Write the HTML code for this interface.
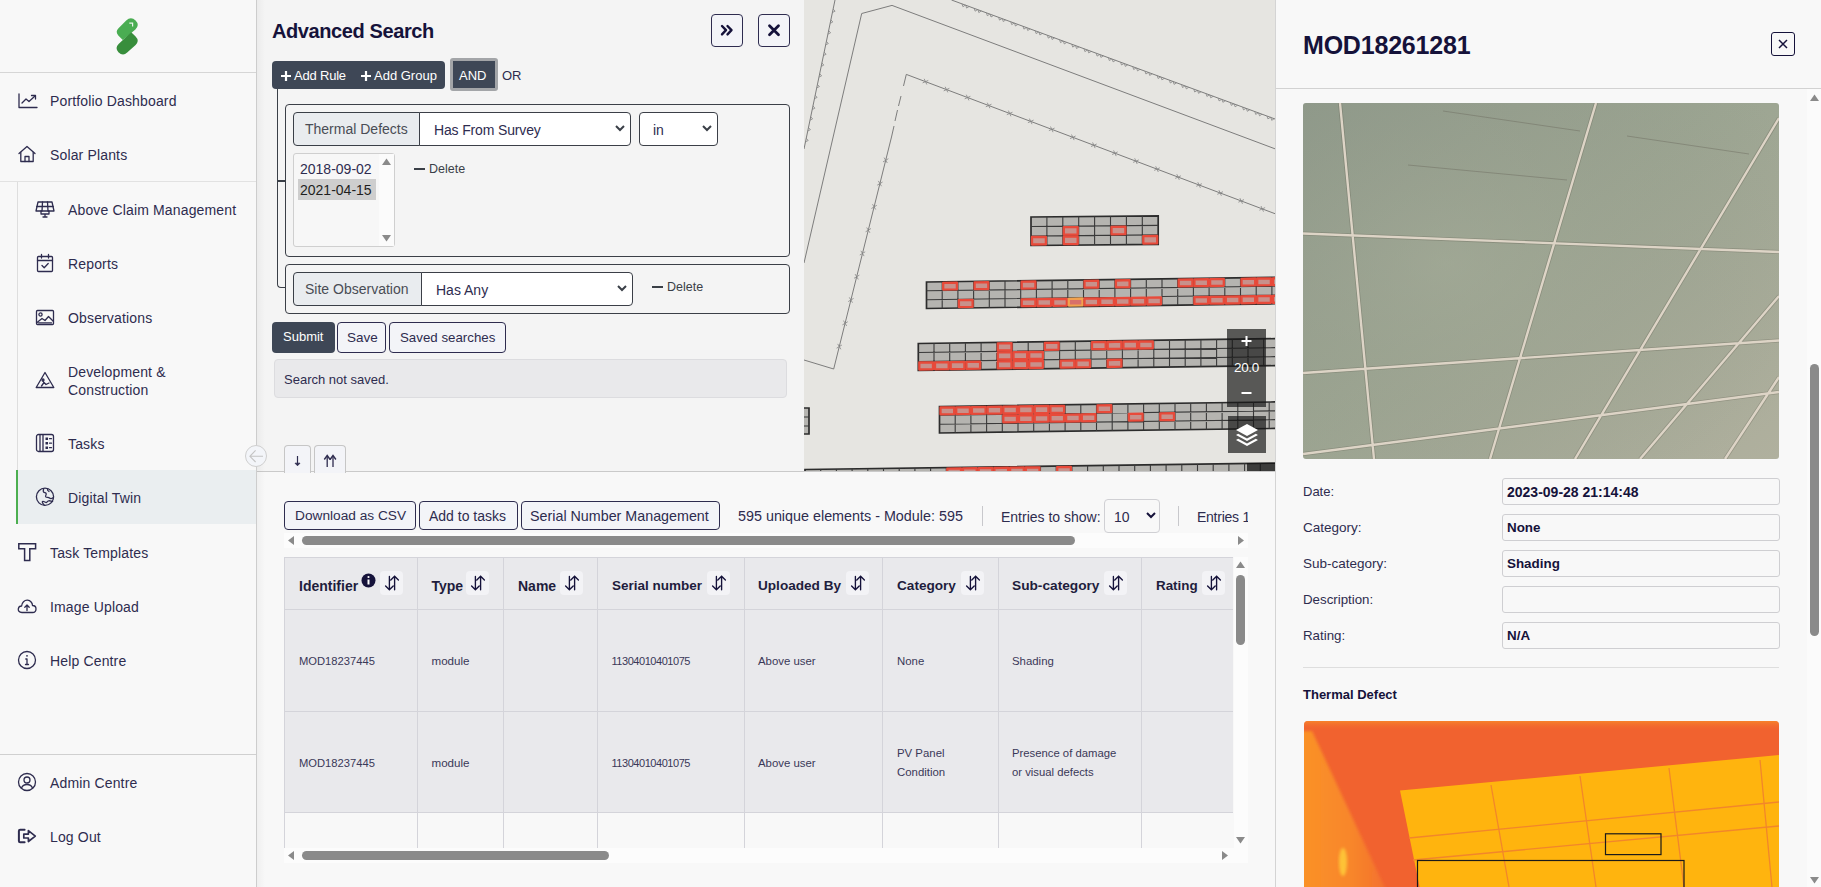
<!DOCTYPE html>
<html><head><meta charset="utf-8">
<style>
*{box-sizing:border-box;margin:0;padding:0}
html,body{width:1821px;height:887px;overflow:hidden;background:#f8f8f8;font-family:"Liberation Sans",sans-serif;color:#2e2c4f}
.a{position:absolute;white-space:nowrap}
#side{position:absolute;left:0;top:0;width:257px;height:887px;background:#f8f8f8;border-right:1px solid #cdcdcd}
.nav{position:absolute;font-size:14px;color:#2e2c4f;letter-spacing:0.15px}
.ico{position:absolute}
#adv{position:absolute;left:257px;top:0;width:547px;height:471px;background:#f4f4f4}
#map{position:absolute;left:804px;top:0;width:471px;height:471px;background:#e5e4e0;overflow:hidden}
#tbl{position:absolute;left:257px;top:471px;width:1018px;height:416px;background:#f8f8f8;border-top:1px solid #cacaca}
#rp{position:absolute;left:1275px;top:0;width:546px;height:887px;background:#f8f8f8;border-left:1px solid #d4d4d4}
.btn{position:absolute;border:1px solid #2e2c4f;border-radius:4px;background:#f3f4f8;font-size:14px;color:#2e2c4f;text-align:center}
.dk{position:absolute;background:#3e4756;color:#fff;font-size:13px}
.box{position:absolute;border:1px solid #3b3f47;border-radius:4px}
.sel{position:absolute;background:#fff;border:1px solid #3b3f47;border-radius:4px;font-size:14px;color:#2e2c4f}
.lbl{position:absolute;background:#e9ecef;font-size:14px;color:#4a4d55}
.th{position:absolute;font-size:14px;font-weight:bold;color:#1f1d3d}
.td{position:absolute;font-size:12px;color:#3a3858}
.sort{position:absolute;width:20px;height:20px;background:#f4f4f6;border-radius:3px}
</style></head><body>


<div id="side">
 <svg class="ico" style="left:112px;top:14px" width="32" height="44" viewBox="112 14 32 44">
  <path d="M118.5 28.2 L126.2 20.5 Q131 16 135.6 20.6 Q140 25 135.4 29.6 L122.8 40 L118.3 35.4 Q115 31.7 118.5 28.2 Z" fill="#4aad52"/>
  <path d="M131.2 32.3 L135.6 36.6 Q139.8 40.8 135.6 45 L127.2 52.6 Q122.8 56.6 118.4 52.2 Q114.6 48 118.6 44 Z" fill="#388e3c"/>
  <path d="M129.3 23.2 L132.6 23.2 L132.6 26.5" stroke="#e8f5e9" stroke-width="1.2" fill="none"/>
 </svg>
 <div style="position:absolute;left:0;top:72px;width:256px;height:1px;background:#d6d6d6"></div>
 <div style="position:absolute;left:0;top:181px;width:256px;height:1px;background:#e2e2e2"></div>
 <div style="position:absolute;left:17px;top:182px;width:1px;height:342px;background:#dedede"></div>
 <div style="position:absolute;left:16px;top:470px;width:240px;height:54px;background:#eaeef0"></div>
 <div style="position:absolute;left:16px;top:470px;width:2px;height:54px;background:#4caf50"></div>
 <div style="position:absolute;left:0;top:754px;width:256px;height:1px;background:#d0d0d0"></div>
<svg class="ico" style="left:17.8px;top:92.5px" width="20" height="16" viewBox="0 0 20 16"><path d="M1 1 V14.5 H19" fill="none" stroke="#2e2c4f" stroke-width="1.3" stroke-linecap="round" stroke-linejoin="round"/><path d="M4 10 L8 6 L11 8.5 L17 3" fill="none" stroke="#2e2c4f" stroke-width="1.3" stroke-linecap="round" stroke-linejoin="round"/><path d="M13.5 2.5 H17.5 V6" fill="none" stroke="#2e2c4f" stroke-width="1.3" stroke-linecap="round" stroke-linejoin="round"/></svg>
<svg class="ico" style="left:17px;top:145px" width="20" height="18" viewBox="0 0 20 18"><path d="M2 8.5 L10 1.5 L18 8.5" fill="none" stroke="#2e2c4f" stroke-width="1.3" stroke-linecap="round" stroke-linejoin="round"/><path d="M3.8 7.5 V16.5 H16.2 V7.5" fill="none" stroke="#2e2c4f" stroke-width="1.3" stroke-linecap="round" stroke-linejoin="round"/><path d="M8 16.5 V11.5 H12 V16.5" fill="none" stroke="#2e2c4f" stroke-width="1.3" stroke-linecap="round" stroke-linejoin="round"/></svg>
<svg class="ico" style="left:35px;top:201px" width="20" height="17" viewBox="0 0 20 17"><path d="M3 1 H17 L19 10 H1 Z" fill="none" stroke="#2e2c4f" stroke-width="1.3" stroke-linecap="round" stroke-linejoin="round"/><path d="M1.8 5.5 H18.2 M7.5 1 L7 10 M12.5 1 L13 10 M6 10 V13 H14 V10 M8 16 H12 M10 13 V16" fill="none" stroke="#2e2c4f" stroke-width="1.3" stroke-linecap="round" stroke-linejoin="round"/></svg>
<svg class="ico" style="left:35px;top:253px" width="20" height="20" viewBox="0 0 20 20"><rect x="2.5" y="3.5" width="15" height="15" rx="1" fill="none" stroke="#2e2c4f" stroke-width="1.3" stroke-linecap="round" stroke-linejoin="round"/><path d="M2.5 7.5 H17.5 M6.5 1.5 V5 M13.5 1.5 V5 M7 12.5 L9.2 14.7 L13.2 10.5" fill="none" stroke="#2e2c4f" stroke-width="1.3" stroke-linecap="round" stroke-linejoin="round"/></svg>
<svg class="ico" style="left:35px;top:309px" width="20" height="17" viewBox="0 0 20 17"><rect x="1.5" y="1.5" width="17" height="14" rx="1" fill="none" stroke="#2e2c4f" stroke-width="1.3" stroke-linecap="round" stroke-linejoin="round"/><circle cx="5.5" cy="5.5" r="1.6" fill="none" stroke="#2e2c4f" stroke-width="1.3" stroke-linecap="round" stroke-linejoin="round"/><path d="M2 13.5 L7 9.5 L10 11.5 L13.5 7.5 L18 12" fill="none" stroke="#2e2c4f" stroke-width="1.3" stroke-linecap="round" stroke-linejoin="round"/><path d="M3.5 13.8 H16.5" fill="none" stroke="#2e2c4f" stroke-width="1.3" stroke-linecap="round" stroke-linejoin="round"/></svg>
<svg class="ico" style="left:35px;top:371px" width="20" height="18" viewBox="0 0 20 18"><path d="M10 1.5 L18.8 16.5 H1.2 Z" fill="none" stroke="#2e2c4f" stroke-width="1.3" stroke-linecap="round" stroke-linejoin="round"/><circle cx="8" cy="9" r="1" fill="none" stroke="#2e2c4f" stroke-width="1.3" stroke-linecap="round" stroke-linejoin="round"/><path d="M6.5 15 L9 11.5 L11 13.5 L14 12 M9 11.5 L8 10" fill="none" stroke="#2e2c4f" stroke-width="1.3" stroke-linecap="round" stroke-linejoin="round"/></svg>
<svg class="ico" style="left:35px;top:433px" width="20" height="20" viewBox="0 0 20 20"><rect x="1.5" y="1.5" width="17" height="17" rx="2" fill="none" stroke="#2e2c4f" stroke-width="1.3" stroke-linecap="round" stroke-linejoin="round"/><path d="M5 2 V18 M8 2 V18" fill="none" stroke="#2e2c4f" stroke-width="1.3" stroke-linecap="round" stroke-linejoin="round"/><rect x="10.5" y="4.5" width="2.5" height="2.5" fill="#2e2c4f"/><rect x="10.5" y="9" width="2.5" height="2.5" fill="#2e2c4f"/><rect x="10.5" y="13.5" width="2.5" height="2.5" fill="#2e2c4f"/><path d="M14.5 5.7 H16.5 M14.5 10.2 H16.5 M14.5 14.7 H16.5" fill="none" stroke="#2e2c4f" stroke-width="1.3" stroke-linecap="round" stroke-linejoin="round"/></svg>
<svg class="ico" style="left:35px;top:487px" width="20" height="20" viewBox="0 0 20 20"><circle cx="10" cy="9.8" r="8.6" fill="none" stroke="#2e2c4f" stroke-width="1.3" stroke-linecap="round" stroke-linejoin="round"/><path d="M8.5 1.6 C8.8 3.2 7.6 3.8 8.6 5 C9.6 6 11 5.2 11.2 6.8 C11.4 8.2 10 8.6 10.8 9.8 C11.6 10.8 13.5 10 14.5 11 C15.5 12 17 11.5 18.4 10.5 M12.5 2.2 C12.2 3.2 13.2 4 14 4.5 M17.6 14.5 C16 14.2 15 13.5 13.5 13.8 C12 14 12.5 15.6 11.2 15.5 C9.5 15.4 8.5 13.6 7.5 14.5 C6.6 15.4 8.5 17.3 9.5 18.4" fill="none" stroke="#2e2c4f" stroke-width="1.3" stroke-linecap="round" stroke-linejoin="round"/></svg>
<svg class="ico" style="left:17px;top:542px" width="20" height="20" viewBox="0 0 20 20"><path d="M1.8 1.8 H18.6 V6.8 H12.8 V18.6 H7.6 V6.8 H1.8 Z" fill="none" stroke="#2e2c4f" stroke-width="1.5" stroke-linejoin="miter"/></svg>
<svg class="ico" style="left:17px;top:598px" width="20" height="17" viewBox="0 0 20 17"><path d="M5 14.5 C2 14.5 1 12.5 1.3 10.8 C1.6 9 3 8 4.6 8 C4.8 4.5 7.5 2 10.5 2.2 C13.5 2.4 15.5 5 15.5 7.5 C17.5 7.5 19 9 19 11 C19 13 17.5 14.5 15.5 14.5 Z" fill="none" stroke="#2e2c4f" stroke-width="1.3" stroke-linecap="round" stroke-linejoin="round"/><path d="M10 12.5 V7 M7.8 9.2 L10 7 L12.2 9.2" fill="none" stroke="#2e2c4f" stroke-width="1.3" stroke-linecap="round" stroke-linejoin="round"/></svg>
<svg class="ico" style="left:17px;top:650px" width="20" height="20" viewBox="0 0 20 20"><circle cx="10" cy="10" r="8.5" fill="none" stroke="#2e2c4f" stroke-width="1.3" stroke-linecap="round" stroke-linejoin="round"/><path d="M10 9 V14.5 M8.5 14.5 H11.5 M8.8 9 H10" fill="none" stroke="#2e2c4f" stroke-width="1.3" stroke-linecap="round" stroke-linejoin="round"/><circle cx="10" cy="5.8" r="0.9" fill="#2e2c4f"/></svg>
<svg class="ico" style="left:17px;top:772px" width="20" height="20" viewBox="0 0 20 20"><circle cx="10" cy="10" r="8.5" fill="none" stroke="#2e2c4f" stroke-width="1.3" stroke-linecap="round" stroke-linejoin="round"/><circle cx="10" cy="8" r="3" fill="none" stroke="#2e2c4f" stroke-width="1.3" stroke-linecap="round" stroke-linejoin="round"/><path d="M4.5 16 C5.5 13.3 7.5 12.5 10 12.5 C12.5 12.5 14.5 13.3 15.5 16" fill="none" stroke="#2e2c4f" stroke-width="1.3" stroke-linecap="round" stroke-linejoin="round"/></svg>
<svg class="ico" style="left:17px;top:827px" width="20" height="18" viewBox="0 0 20 18"><path d="M7.6 2.8 H3.2 Q1.9 2.8 1.9 4.1 V14 Q1.9 15.3 3.2 15.3 H7.6" fill="none" stroke="#2e2c4f" stroke-width="2" stroke-linecap="round"/><path d="M6.8 7.1 H11.4 V3.6 L18.3 9.05 L11.4 14.5 V11 H6.8 Z" fill="none" stroke="#2e2c4f" stroke-width="1.7" stroke-linejoin="round"/></svg>
 <div class="nav a" style="left:50px;top:92px;line-height:18px">Portfolio Dashboard</div>
 <div class="nav a" style="left:50px;top:146px;line-height:18px">Solar Plants</div>
 <div class="nav a" style="left:68px;top:201px;line-height:18px">Above Claim Management</div>
 <div class="nav a" style="left:68px;top:255px;line-height:18px">Reports</div>
 <div class="nav a" style="left:68px;top:309px;line-height:18px">Observations</div>
 <div class="nav a" style="left:68px;top:363px;line-height:18px">Development &amp;</div>
 <div class="nav a" style="left:68px;top:381px;line-height:18px">Construction</div>
 <div class="nav a" style="left:68px;top:435px;line-height:18px">Tasks</div>
 <div class="nav a" style="left:68px;top:489px;line-height:18px">Digital Twin</div>
 <div class="nav a" style="left:50px;top:544px;line-height:18px">Task Templates</div>
 <div class="nav a" style="left:50px;top:598px;line-height:18px">Image Upload</div>
 <div class="nav a" style="left:50px;top:652px;line-height:18px">Help Centre</div>
 <div class="nav a" style="left:50px;top:774px;line-height:18px">Admin Centre</div>
 <div class="nav a" style="left:50px;top:828px;line-height:18px">Log Out</div>
</div>
<div id="adv"></div>
<div class="a" style="left:272px;top:19px;font-size:20px;font-weight:bold;letter-spacing:-0.4px;color:#15123a;line-height:24px">Advanced Search</div>
<div class="btn" style="left:711px;top:14px;width:32px;height:33px"><svg width="30" height="31" viewBox="0 0 30 31"><path d="M10 11 L14 15.2 L10 19.4 M15.5 11 L19.5 15.2 L15.5 19.4" fill="none" stroke="#15123a" stroke-width="2.4" stroke-linecap="round" stroke-linejoin="round"/></svg></div>
<div class="btn" style="left:758px;top:14px;width:32px;height:33px"><svg width="30" height="31" viewBox="0 0 30 31"><path d="M10.5 10.8 L19.5 19.8 M19.5 10.8 L10.5 19.8" fill="none" stroke="#15123a" stroke-width="2.8" stroke-linecap="round"/></svg></div>

<div class="dk" style="left:272px;top:61px;width:173px;height:28px;border-radius:4px"></div>
<svg class="a" style="left:280px;top:70px" width="12" height="12" viewBox="0 0 12 12"><path d="M6 1 V11 M1 6 H11" stroke="#fff" stroke-width="2.2"/></svg>
<div class="a" style="left:294px;top:68px;font-size:13px;color:#fff;line-height:16px;letter-spacing:-0.2px">Add Rule</div>
<svg class="a" style="left:360px;top:70px" width="12" height="12" viewBox="0 0 12 12"><path d="M6 1 V11 M1 6 H11" stroke="#fff" stroke-width="2.2"/></svg>
<div class="a" style="left:374px;top:68px;font-size:13px;color:#fff;line-height:16px">Add Group</div>
<div class="a" style="left:450px;top:58px;width:48px;height:33px;border:3px solid #a3a5a8;border-radius:3px;background:#3e4756"></div>
<div class="a" style="left:459px;top:68px;font-size:13px;color:#fff;line-height:16px">AND</div>
<div class="a" style="left:502px;top:68px;font-size:13px;color:#2e2c4f;line-height:16px">OR</div>

<div class="a" style="left:277px;top:89px;width:8px;height:199px;border-left:1.5px solid #3a3f47;border-bottom:1.5px solid #3a3f47;border-bottom-left-radius:4px"></div>
<div class="a" style="left:277px;top:180px;width:8px;height:1.5px;background:#3a3f47"></div>

<div class="box" style="left:285px;top:104px;width:505px;height:153px"></div>
<div class="lbl" style="left:293px;top:112px;width:127px;height:34px;border:1px solid #3a3f47;border-radius:4px 0 0 4px"></div>
<div class="a" style="left:305px;top:120px;font-size:14px;color:#4a4d55;line-height:18px">Thermal Defects</div>
<div class="sel" style="left:419px;top:112px;width:212px;height:34px;border-radius:0 4px 4px 0"></div>
<div class="a" style="left:434px;top:121px;font-size:14px;color:#2e2c4f;line-height:18px;letter-spacing:-0.15px">Has From Survey</div>
<svg class="a" style="left:614px;top:123px" width="12" height="10" viewBox="0 0 12 10"><path d="M2 3 L6 7 L10 3" fill="none" stroke="#3a3f47" stroke-width="2"/></svg>
<div class="sel" style="left:639px;top:112px;width:79px;height:34px"></div>
<div class="a" style="left:653px;top:121px;font-size:14px;color:#2e2c4f;line-height:18px">in</div>
<svg class="a" style="left:701px;top:123px" width="12" height="10" viewBox="0 0 12 10"><path d="M2 3 L6 7 L10 3" fill="none" stroke="#3a3f47" stroke-width="2"/></svg>

<div class="a" style="left:293px;top:153px;width:102px;height:94px;border:1px solid #cfcfcf;border-radius:3px;background:#f7f7f7"></div>
<div class="a" style="left:379px;top:154px;width:15px;height:92px;background:#fbfbfb"></div>
<svg class="a" style="left:381px;top:157px" width="11" height="9" viewBox="0 0 11 9"><path d="M1 8 L5.5 1.5 L10 8 Z" fill="#8a8a8a"/></svg>
<svg class="a" style="left:381px;top:234px" width="11" height="9" viewBox="0 0 11 9"><path d="M1 1 L5.5 7.5 L10 1 Z" fill="#8a8a8a"/></svg>
<div class="a" style="left:298px;top:179px;width:78px;height:21px;background:#cecece"></div>
<div class="a" style="left:300px;top:160px;font-size:14px;color:#2e2c4f;line-height:18px">2018-09-02</div>
<div class="a" style="left:300px;top:181px;font-size:14px;color:#1f1f1f;line-height:18px">2021-04-15</div>
<div class="a" style="left:414px;top:168px;width:11px;height:2px;background:#3a3f47"></div>
<div class="a" style="left:429px;top:161px;font-size:12.5px;color:#3a3f47;line-height:16px">Delete</div>

<div class="box" style="left:285px;top:264px;width:505px;height:50px"></div>
<div class="lbl" style="left:293px;top:272px;width:129px;height:34px;border:1px solid #3a3f47;border-radius:4px 0 0 4px"></div>
<div class="a" style="left:305px;top:280px;font-size:14px;color:#4a4d55;line-height:18px">Site Observation</div>
<div class="sel" style="left:421px;top:272px;width:212px;height:34px;border-radius:0 4px 4px 0"></div>
<div class="a" style="left:436px;top:281px;font-size:14px;color:#2e2c4f;line-height:18px">Has Any</div>
<svg class="a" style="left:616px;top:283px" width="12" height="10" viewBox="0 0 12 10"><path d="M2 3 L6 7 L10 3" fill="none" stroke="#3a3f47" stroke-width="2"/></svg>
<div class="a" style="left:652px;top:286px;width:11px;height:2px;background:#3a3f47"></div>
<div class="a" style="left:667px;top:279px;font-size:12.5px;color:#3a3f47;line-height:16px">Delete</div>

<div class="dk" style="left:272px;top:322px;width:63px;height:31px;border-radius:4px"></div>
<div class="a" style="left:283px;top:329px;font-size:13px;color:#fff;line-height:16px">Submit</div>
<div class="btn" style="left:337px;top:322px;width:49px;height:31px;border-radius:4px"></div>
<div class="a" style="left:347px;top:330px;font-size:13.5px;color:#2e2c4f;line-height:16px">Save</div>
<div class="btn" style="left:389px;top:322px;width:117px;height:31px;border-radius:4px"></div>
<div class="a" style="left:400px;top:330px;font-size:13.3px;color:#2e2c4f;line-height:16px">Saved searches</div>

<div class="a" style="left:274px;top:359px;width:513px;height:39px;background:#e9e9eb;border:1px solid #dcdcdf;border-radius:4px"></div>
<div class="a" style="left:284px;top:372px;font-size:13px;color:#2e2c4f;line-height:16px">Search not saved.</div>

<div class="a" style="z-index:3;left:284px;top:445px;width:27px;height:28px;border:1px solid #c6c6c6;border-bottom:none;border-radius:4px 4px 0 0;background:#f3f4f8"></div>
<div class="a" style="z-index:3;left:314px;top:445px;width:32px;height:28px;border:1px solid #c6c6c6;border-bottom:none;border-radius:4px 4px 0 0;background:#f3f4f8"></div>
<svg class="a" style="z-index:4;left:290px;top:453px" width="14" height="15" viewBox="0 0 14 15"><path d="M7.5 3 V12" fill="none" stroke="#2e2c4f" stroke-width="1.2"/><path d="M5 10.2 L7.5 12.8 L10 10.2 Z" fill="#2e2c4f" stroke="#2e2c4f" stroke-width="0.8"/></svg>
<svg class="a" style="z-index:4;left:322px;top:453px" width="16" height="15" viewBox="0 0 16 15"><path d="M5.2 14 V3.5 M11 14 V3.5" fill="none" stroke="#2e2c4f" stroke-width="1.3"/><path d="M2.3 6.5 L5.2 2.5 L8.1 6.5 M8.1 6.5 L11 2.5 L13.9 6.5" fill="none" stroke="#2e2c4f" stroke-width="1.4" stroke-linejoin="miter"/></svg>
<div class="a" style="z-index:5;left:245px;top:445px;width:22px;height:22px;border-radius:50%;border:1px solid #cfcfcf;background:#f3f5f9"></div>
<svg class="a" style="z-index:6;left:248px;top:449px" width="18" height="15" viewBox="0 0 18 15"><path d="M15 7.3 H2 M7.6 1.4 L1.9 7.3 L7.6 13" fill="none" stroke="#c4c4c4" stroke-width="1.1"/></svg>
<div class="a" style="z-index:2;left:257px;top:0;width:8px;height:887px;background:linear-gradient(to right,rgba(0,0,0,0.035),rgba(0,0,0,0))"></div>
<div id="map"><svg width="471" height="471" viewBox="804 0 471 471" style="position:absolute;left:0;top:0">
<rect x="804" y="0" width="471" height="471" fill="#e6e5e1"/>
<g stroke="#707070" stroke-width="0.9" fill="none">
<path d="M835 0 L804 149"/>
<path d="M951.5 0 L1275 119"/>
<path d="M1275 148.8 L892 5.4 L861.7 13.5 L804 263"/>
<path d="M1275 213.7 L906.3 74.4 L903.5 86"/>
<path d="M901 96 L898.5 106 M897.5 110 L895 121 M894 126 L891.5 137 L833.7 369 L804 360"/>
</g>
<g stroke="#858585" stroke-width="0.8" fill="none">
<path d="M833.1 9.0 L835.1 11.2 L832.4 12.5 M830.9 19.8 L832.8 22.0 L830.2 23.3 M828.6 30.5 L830.6 32.8 L827.9 34.1 M826.4 41.3 L828.3 43.6 L825.7 44.8 M824.2 52.1 L826.1 54.3 L823.4 55.6 M821.9 62.9 L823.8 65.1 L821.2 66.4 M819.7 73.6 L821.6 75.9 L818.9 77.1 M817.4 84.4 L819.4 86.6 L816.7 87.9 M815.2 95.2 L817.1 97.4 L814.5 98.7 M813.0 105.9 L814.9 108.2 L812.2 109.5 M810.7 116.7 L812.6 118.9 L810.0 120.2 M808.5 127.5 L810.4 129.7 L807.7 131.0 M806.2 138.2 L808.2 140.5 L805.5 141.8 "/>
<path d="M962.0 3.9 L962.9 6.7 L965.4 5.1 M974.2 8.4 L975.1 11.2 L977.6 9.6 M986.4 12.8 L987.3 15.7 L989.8 14.1 M998.6 17.3 L999.5 20.1 L1002.0 18.6 M1010.8 21.8 L1011.7 24.6 L1014.2 23.1 M1023.0 26.3 L1023.9 29.1 L1026.4 27.5 M1035.2 30.8 L1036.1 33.6 L1038.6 32.0 M1047.4 35.3 L1048.3 38.1 L1050.8 36.5 M1059.6 39.8 L1060.5 42.6 L1063.0 41.0 M1071.8 44.3 L1072.7 47.1 L1075.2 45.5 M1084.0 48.7 L1084.9 51.6 L1087.4 50.0 M1096.2 53.2 L1097.1 56.1 L1099.6 54.5 M1108.4 57.7 L1109.3 60.5 L1111.8 59.0 M1120.6 62.2 L1121.5 65.0 L1124.0 63.5 M1132.8 66.7 L1133.7 69.5 L1136.2 67.9 M1145.0 71.2 L1145.9 74.0 L1148.4 72.4 M1157.2 75.7 L1158.1 78.5 L1160.6 76.9 M1169.4 80.2 L1170.3 83.0 L1172.8 81.4 M1181.6 84.7 L1182.5 87.5 L1185.0 85.9 M1193.8 89.1 L1194.7 92.0 L1197.2 90.4 M1206.0 93.6 L1206.9 96.4 L1209.4 94.9 M1218.2 98.1 L1219.1 100.9 L1221.6 99.4 M1230.4 102.6 L1231.3 105.4 L1233.8 103.8 M1242.6 107.1 L1243.5 109.9 L1246.0 108.3 M1254.8 111.6 L1255.7 114.4 L1258.2 112.8 M1267.0 116.1 L1267.9 118.9 L1270.4 117.3 "/>
<path d="M965.8 5.2 L966.6 8.1 L969.1 6.5 M978.0 9.7 L978.8 12.6 L981.3 11.0 M990.2 14.2 L991.0 17.0 L993.5 15.5 M1002.4 18.7 L1003.2 21.5 L1005.7 20.0 M1014.6 23.2 L1015.4 26.0 L1017.9 24.4 M1026.8 27.7 L1027.7 30.5 L1030.1 28.9 M1039.0 32.2 L1039.9 35.0 L1042.3 33.4 M1051.2 36.7 L1052.1 39.5 L1054.5 37.9 M1063.4 41.2 L1064.3 44.0 L1066.7 42.4 M1075.6 45.6 L1076.5 48.5 L1079.0 46.9 M1087.8 50.1 L1088.7 52.9 L1091.2 51.4 M1100.0 54.6 L1100.9 57.4 L1103.4 55.9 M1112.2 59.1 L1113.1 61.9 L1115.6 60.3 M1124.4 63.6 L1125.3 66.4 L1127.8 64.8 M1136.6 68.1 L1137.5 70.9 L1140.0 69.3 M1148.8 72.6 L1149.7 75.4 L1152.2 73.8 M1161.0 77.1 L1161.9 79.9 L1164.4 78.3 M1173.2 81.5 L1174.1 84.4 L1176.6 82.8 M1185.4 86.0 L1186.3 88.9 L1188.8 87.3 M1197.6 90.5 L1198.5 93.3 L1201.0 91.8 M1209.8 95.0 L1210.7 97.8 L1213.2 96.3 M1222.0 99.5 L1222.9 102.3 L1225.4 100.7 M1234.2 104.0 L1235.1 106.8 L1237.6 105.2 M1246.4 108.5 L1247.3 111.3 L1249.8 109.7 M1258.6 113.0 L1259.5 115.8 L1262.0 114.2 M1270.8 117.4 L1271.7 120.3 L1274.2 118.7 "/>
<path d="M922.6 82.9 L928.3 80.4 M926.8 84.5 L924.2 78.8 M943.7 90.9 L949.4 88.3 M947.8 92.4 L945.2 86.8 M964.7 98.8 L970.4 96.3 M968.9 100.4 L966.3 94.7 M985.8 106.8 L991.5 104.2 M989.9 108.3 L987.3 102.7 M1006.8 114.7 L1012.5 112.2 M1010.9 116.3 L1008.4 110.6 M1027.9 122.7 L1033.6 120.1 M1032.0 124.2 L1029.4 118.6 M1048.9 130.6 L1054.6 128.1 M1053.0 132.2 L1050.5 126.5 M1070.0 138.6 L1075.6 136.0 M1074.1 140.1 L1071.5 134.5 M1091.0 146.5 L1096.7 144.0 M1095.1 148.1 L1092.6 142.4 M1112.1 154.5 L1117.7 151.9 M1116.2 156.1 L1113.6 150.4 M1133.1 162.4 L1138.8 159.9 M1137.2 164.0 L1134.7 158.3 M1154.2 170.4 L1159.8 167.8 M1158.3 172.0 L1155.7 166.3 M1175.2 178.4 L1180.9 175.8 M1179.3 179.9 L1176.8 174.2 M1196.3 186.3 L1201.9 183.7 M1200.4 187.9 L1197.8 182.2 M1217.3 194.3 L1223.0 191.7 M1221.4 195.8 L1218.9 190.1 M1238.4 202.2 L1244.0 199.6 M1242.5 203.8 L1239.9 198.1 M1259.4 210.2 L1265.1 207.6 M1263.5 211.7 L1261.0 206.0 "/>
<path d="M884.1 157.6 L887.3 163.0 M883.0 161.9 L888.4 158.7 M878.3 180.9 L881.5 186.2 M877.2 185.2 L882.6 182.0 M872.5 204.2 L875.7 209.5 M871.4 208.5 L876.8 205.3 M866.7 227.5 L869.9 232.8 M865.6 231.8 L871.0 228.5 M860.9 250.8 L864.1 256.1 M859.8 255.0 L865.2 251.8 M855.1 274.1 L858.3 279.4 M854.0 278.3 L859.4 275.1 M849.3 297.4 L852.5 302.7 M848.2 301.6 L853.6 298.4 M843.5 320.6 L846.7 326.0 M842.4 324.9 L847.8 321.7 M837.7 343.9 L840.9 349.3 M836.6 348.2 L841.9 345.0 "/>
</g>
<path d="M1031 217.0 L1158.2 215.9 L1158.2 244.4 L1031 245.5 Z" fill="#b5b4b0" stroke="#2c2c2c" stroke-width="1.7"/>
<path d="M1031 226.5 L1158.2 225.4 M1031 236.0 L1158.2 234.9 M1046.9 216.9 L1046.9 245.4 M1062.8 216.7 L1062.8 245.2 M1078.7 216.6 L1078.7 245.1 M1094.6 216.5 L1094.6 245.0 M1110.5 216.3 L1110.5 244.8 M1126.4 216.2 L1126.4 244.7 M1142.3 216.1 L1142.3 244.6 " stroke="#3a3a3a" stroke-width="1.1" fill="none"/>
<path d="M1063.8 227.2 L1077.7 227.1 L1077.7 234.6 L1063.8 234.7 Z" fill="#c8918b" stroke="#e84a3a" stroke-width="2.3" stroke-linejoin="round"/>
<path d="M1063.8 236.7 L1077.7 236.6 L1077.7 244.1 L1063.8 244.2 Z" fill="#c8918b" stroke="#e84a3a" stroke-width="2.3" stroke-linejoin="round"/>
<path d="M1032.0 237.0 L1045.9 236.9 L1045.9 244.4 L1032.0 244.5 Z" fill="#c8918b" stroke="#e84a3a" stroke-width="2.3" stroke-linejoin="round"/>
<path d="M1111.5 226.8 L1125.4 226.7 L1125.4 234.2 L1111.5 234.3 Z" fill="#c8918b" stroke="#e84a3a" stroke-width="2.3" stroke-linejoin="round"/>
<path d="M1143.3 236.1 L1157.2 235.9 L1157.2 243.4 L1143.3 243.6 Z" fill="#c8918b" stroke="#e84a3a" stroke-width="2.3" stroke-linejoin="round"/>
<path d="M926.5 282.0 L1287.6 277.1 L1287.6 303.6 L926.5 308.5 Z" fill="#b5b4b0" stroke="#2c2c2c" stroke-width="1.7"/>
<path d="M926.5 290.8 L1287.6 286.0 M926.5 299.7 L1287.6 294.8 M942.2 281.8 L942.2 308.3 M957.9 281.6 L957.9 308.1 M973.6 281.4 L973.6 307.9 M989.3 281.2 L989.3 307.7 M1005.0 280.9 L1005.0 307.4 M1020.7 280.7 L1020.7 307.2 M1036.4 280.5 L1036.4 307.0 M1052.1 280.3 L1052.1 306.8 M1067.8 280.1 L1067.8 306.6 M1083.5 279.9 L1083.5 306.4 M1099.2 279.7 L1099.2 306.2 M1114.9 279.5 L1114.9 306.0 M1130.6 279.2 L1130.6 305.7 M1146.3 279.0 L1146.3 305.5 M1162.0 278.8 L1162.0 305.3 M1177.7 278.6 L1177.7 305.1 M1193.4 278.4 L1193.4 304.9 M1209.1 278.2 L1209.1 304.7 M1224.8 278.0 L1224.8 304.5 M1240.5 277.8 L1240.5 304.3 M1256.2 277.5 L1256.2 304.0 M1271.9 277.3 L1271.9 303.8 " stroke="#3a3a3a" stroke-width="1.1" fill="none"/>
<path d="M943.2 282.8 L956.9 282.6 L956.9 289.4 L943.2 289.6 Z" fill="#c8918b" stroke="#e84a3a" stroke-width="2.3" stroke-linejoin="round"/>
<path d="M974.6 282.4 L988.3 282.2 L988.3 289.0 L974.6 289.2 Z" fill="#c8918b" stroke="#e84a3a" stroke-width="2.3" stroke-linejoin="round"/>
<path d="M1021.7 281.7 L1035.4 281.5 L1035.4 288.3 L1021.7 288.6 Z" fill="#c8918b" stroke="#e84a3a" stroke-width="2.3" stroke-linejoin="round"/>
<path d="M1084.5 280.9 L1098.2 280.7 L1098.2 287.5 L1084.5 287.7 Z" fill="#c8918b" stroke="#e84a3a" stroke-width="2.3" stroke-linejoin="round"/>
<path d="M1115.9 280.5 L1129.6 280.2 L1129.6 287.1 L1115.9 287.3 Z" fill="#c8918b" stroke="#e84a3a" stroke-width="2.3" stroke-linejoin="round"/>
<path d="M1178.7 279.6 L1192.4 279.4 L1192.4 286.2 L1178.7 286.4 Z" fill="#c8918b" stroke="#e84a3a" stroke-width="2.3" stroke-linejoin="round"/>
<path d="M1194.4 279.4 L1208.1 279.2 L1208.1 286.0 L1194.4 286.2 Z" fill="#c8918b" stroke="#e84a3a" stroke-width="2.3" stroke-linejoin="round"/>
<path d="M1210.1 279.2 L1223.8 279.0 L1223.8 285.8 L1210.1 286.0 Z" fill="#c8918b" stroke="#e84a3a" stroke-width="2.3" stroke-linejoin="round"/>
<path d="M1241.5 278.8 L1255.2 278.5 L1255.2 285.4 L1241.5 285.6 Z" fill="#c8918b" stroke="#e84a3a" stroke-width="2.3" stroke-linejoin="round"/>
<path d="M1257.2 278.5 L1270.9 278.3 L1270.9 285.2 L1257.2 285.4 Z" fill="#c8918b" stroke="#e84a3a" stroke-width="2.3" stroke-linejoin="round"/>
<path d="M1272.9 278.3 L1286.6 278.1 L1286.6 285.0 L1272.9 285.2 Z" fill="#c8918b" stroke="#e84a3a" stroke-width="2.3" stroke-linejoin="round"/>
<path d="M958.9 300.2 L972.6 300.0 L972.6 306.9 L958.9 307.1 Z" fill="#c8918b" stroke="#e84a3a" stroke-width="2.3" stroke-linejoin="round"/>
<path d="M1021.7 299.4 L1035.4 299.2 L1035.4 306.0 L1021.7 306.2 Z" fill="#c8918b" stroke="#e84a3a" stroke-width="2.3" stroke-linejoin="round"/>
<path d="M1037.4 299.2 L1051.1 299.0 L1051.1 305.8 L1037.4 306.0 Z" fill="#c8918b" stroke="#e84a3a" stroke-width="2.3" stroke-linejoin="round"/>
<path d="M1053.1 299.0 L1066.8 298.8 L1066.8 305.6 L1053.1 305.8 Z" fill="#c8918b" stroke="#e84a3a" stroke-width="2.3" stroke-linejoin="round"/>
<path d="M1068.8 298.8 L1082.5 298.5 L1082.5 305.4 L1068.8 305.6 Z" fill="#d8706a" stroke="#f2a24e" stroke-width="2.3" stroke-linejoin="round"/>
<path d="M1084.5 298.5 L1098.2 298.3 L1098.2 305.2 L1084.5 305.4 Z" fill="#c8918b" stroke="#e84a3a" stroke-width="2.3" stroke-linejoin="round"/>
<path d="M1100.2 298.3 L1113.9 298.1 L1113.9 305.0 L1100.2 305.2 Z" fill="#c8918b" stroke="#e84a3a" stroke-width="2.3" stroke-linejoin="round"/>
<path d="M1115.9 298.1 L1129.6 297.9 L1129.6 304.7 L1115.9 305.0 Z" fill="#c8918b" stroke="#e84a3a" stroke-width="2.3" stroke-linejoin="round"/>
<path d="M1131.6 297.9 L1145.3 297.7 L1145.3 304.5 L1131.6 304.7 Z" fill="#c8918b" stroke="#e84a3a" stroke-width="2.3" stroke-linejoin="round"/>
<path d="M1147.3 297.7 L1161.0 297.5 L1161.0 304.3 L1147.3 304.5 Z" fill="#c8918b" stroke="#e84a3a" stroke-width="2.3" stroke-linejoin="round"/>
<path d="M1194.4 297.1 L1208.1 296.9 L1208.1 303.7 L1194.4 303.9 Z" fill="#c8918b" stroke="#e84a3a" stroke-width="2.3" stroke-linejoin="round"/>
<path d="M1210.1 296.9 L1223.8 296.6 L1223.8 303.5 L1210.1 303.7 Z" fill="#c8918b" stroke="#e84a3a" stroke-width="2.3" stroke-linejoin="round"/>
<path d="M1225.8 296.6 L1239.5 296.4 L1239.5 303.3 L1225.8 303.5 Z" fill="#c8918b" stroke="#e84a3a" stroke-width="2.3" stroke-linejoin="round"/>
<path d="M1241.5 296.4 L1255.2 296.2 L1255.2 303.0 L1241.5 303.3 Z" fill="#c8918b" stroke="#e84a3a" stroke-width="2.3" stroke-linejoin="round"/>
<path d="M1257.2 296.2 L1270.9 296.0 L1270.9 302.8 L1257.2 303.0 Z" fill="#c8918b" stroke="#e84a3a" stroke-width="2.3" stroke-linejoin="round"/>
<path d="M1272.9 296.0 L1286.6 295.8 L1286.6 302.6 L1272.9 302.8 Z" fill="#c8918b" stroke="#e84a3a" stroke-width="2.3" stroke-linejoin="round"/>
<path d="M918.3 343.5 L1279.4 338.6 L1279.4 365.6 L918.3 370.5 Z" fill="#b5b4b0" stroke="#2c2c2c" stroke-width="1.7"/>
<path d="M918.3 352.5 L1279.4 347.6 M918.3 361.5 L1279.4 356.6 M934.0 343.3 L934.0 370.3 M949.7 343.1 L949.7 370.1 M965.4 342.9 L965.4 369.9 M981.1 342.7 L981.1 369.7 M996.8 342.4 L996.8 369.4 M1012.5 342.2 L1012.5 369.2 M1028.2 342.0 L1028.2 369.0 M1043.9 341.8 L1043.9 368.8 M1059.6 341.6 L1059.6 368.6 M1075.3 341.4 L1075.3 368.4 M1091.0 341.2 L1091.0 368.2 M1106.7 341.0 L1106.7 368.0 M1122.4 340.7 L1122.4 367.7 M1138.1 340.5 L1138.1 367.5 M1153.8 340.3 L1153.8 367.3 M1169.5 340.1 L1169.5 367.1 M1185.2 339.9 L1185.2 366.9 M1200.9 339.7 L1200.9 366.7 M1216.6 339.5 L1216.6 366.5 M1232.3 339.3 L1232.3 366.3 M1248.0 339.0 L1248.0 366.0 M1263.7 338.8 L1263.7 365.8 " stroke="#3a3a3a" stroke-width="1.1" fill="none"/>
<path d="M997.8 343.4 L1011.5 343.2 L1011.5 350.2 L997.8 350.4 Z" fill="#c8918b" stroke="#e84a3a" stroke-width="2.3" stroke-linejoin="round"/>
<path d="M1044.9 342.8 L1058.6 342.6 L1058.6 349.6 L1044.9 349.8 Z" fill="#c8918b" stroke="#e84a3a" stroke-width="2.3" stroke-linejoin="round"/>
<path d="M1092.0 342.2 L1105.7 342.0 L1105.7 349.0 L1092.0 349.2 Z" fill="#c8918b" stroke="#e84a3a" stroke-width="2.3" stroke-linejoin="round"/>
<path d="M1107.7 342.0 L1121.4 341.7 L1121.4 348.7 L1107.7 349.0 Z" fill="#c8918b" stroke="#e84a3a" stroke-width="2.3" stroke-linejoin="round"/>
<path d="M1123.4 341.7 L1137.1 341.5 L1137.1 348.5 L1123.4 348.7 Z" fill="#c8918b" stroke="#e84a3a" stroke-width="2.3" stroke-linejoin="round"/>
<path d="M1139.1 341.5 L1152.8 341.3 L1152.8 348.3 L1139.1 348.5 Z" fill="#c8918b" stroke="#e84a3a" stroke-width="2.3" stroke-linejoin="round"/>
<path d="M997.8 352.4 L1011.5 352.2 L1011.5 359.2 L997.8 359.4 Z" fill="#c8918b" stroke="#e84a3a" stroke-width="2.3" stroke-linejoin="round"/>
<path d="M1013.5 352.2 L1027.2 352.0 L1027.2 359.0 L1013.5 359.2 Z" fill="#c8918b" stroke="#e84a3a" stroke-width="2.3" stroke-linejoin="round"/>
<path d="M1029.2 352.0 L1042.9 351.8 L1042.9 358.8 L1029.2 359.0 Z" fill="#c8918b" stroke="#e84a3a" stroke-width="2.3" stroke-linejoin="round"/>
<path d="M919.3 362.5 L933.0 362.3 L933.0 369.3 L919.3 369.5 Z" fill="#c8918b" stroke="#e84a3a" stroke-width="2.3" stroke-linejoin="round"/>
<path d="M935.0 362.3 L948.7 362.1 L948.7 369.1 L935.0 369.3 Z" fill="#c8918b" stroke="#e84a3a" stroke-width="2.3" stroke-linejoin="round"/>
<path d="M950.7 362.1 L964.4 361.9 L964.4 368.9 L950.7 369.1 Z" fill="#c8918b" stroke="#e84a3a" stroke-width="2.3" stroke-linejoin="round"/>
<path d="M966.4 361.9 L980.1 361.7 L980.1 368.7 L966.4 368.9 Z" fill="#c8918b" stroke="#e84a3a" stroke-width="2.3" stroke-linejoin="round"/>
<path d="M997.8 361.4 L1011.5 361.2 L1011.5 368.2 L997.8 368.4 Z" fill="#c8918b" stroke="#e84a3a" stroke-width="2.3" stroke-linejoin="round"/>
<path d="M1013.5 361.2 L1027.2 361.0 L1027.2 368.0 L1013.5 368.2 Z" fill="#c8918b" stroke="#e84a3a" stroke-width="2.3" stroke-linejoin="round"/>
<path d="M1029.2 361.0 L1042.9 360.8 L1042.9 367.8 L1029.2 368.0 Z" fill="#c8918b" stroke="#e84a3a" stroke-width="2.3" stroke-linejoin="round"/>
<path d="M1060.6 360.6 L1074.3 360.4 L1074.3 367.4 L1060.6 367.6 Z" fill="#c8918b" stroke="#e84a3a" stroke-width="2.3" stroke-linejoin="round"/>
<path d="M1076.3 360.4 L1090.0 360.2 L1090.0 367.2 L1076.3 367.4 Z" fill="#c8918b" stroke="#e84a3a" stroke-width="2.3" stroke-linejoin="round"/>
<path d="M1107.7 360.0 L1121.4 359.7 L1121.4 366.7 L1107.7 367.0 Z" fill="#c8918b" stroke="#e84a3a" stroke-width="2.3" stroke-linejoin="round"/>
<path d="M939.5 406.5 L1284.9 401.8 L1284.9 428.3 L939.5 433.0 Z" fill="#b5b4b0" stroke="#2c2c2c" stroke-width="1.7"/>
<path d="M939.5 415.3 L1284.9 410.7 M939.5 424.2 L1284.9 419.5 M955.2 406.3 L955.2 432.8 M970.9 406.1 L970.9 432.6 M986.6 405.9 L986.6 432.4 M1002.3 405.7 L1002.3 432.2 M1018.0 405.4 L1018.0 431.9 M1033.7 405.2 L1033.7 431.7 M1049.4 405.0 L1049.4 431.5 M1065.1 404.8 L1065.1 431.3 M1080.8 404.6 L1080.8 431.1 M1096.5 404.4 L1096.5 430.9 M1112.2 404.2 L1112.2 430.7 M1127.9 404.0 L1127.9 430.5 M1143.6 403.7 L1143.6 430.2 M1159.3 403.5 L1159.3 430.0 M1175.0 403.3 L1175.0 429.8 M1190.7 403.1 L1190.7 429.6 M1206.4 402.9 L1206.4 429.4 M1222.1 402.7 L1222.1 429.2 M1237.8 402.5 L1237.8 429.0 M1253.5 402.3 L1253.5 428.8 M1269.2 402.0 L1269.2 428.5 " stroke="#3a3a3a" stroke-width="1.1" fill="none"/>
<path d="M940.5 407.5 L954.2 407.3 L954.2 414.1 L940.5 414.3 Z" fill="#c8918b" stroke="#e84a3a" stroke-width="2.3" stroke-linejoin="round"/>
<path d="M956.2 407.3 L969.9 407.1 L969.9 413.9 L956.2 414.1 Z" fill="#c8918b" stroke="#e84a3a" stroke-width="2.3" stroke-linejoin="round"/>
<path d="M971.9 407.1 L985.6 406.9 L985.6 413.7 L971.9 413.9 Z" fill="#c8918b" stroke="#e84a3a" stroke-width="2.3" stroke-linejoin="round"/>
<path d="M987.6 406.9 L1001.3 406.7 L1001.3 413.5 L987.6 413.7 Z" fill="#c8918b" stroke="#e84a3a" stroke-width="2.3" stroke-linejoin="round"/>
<path d="M1003.3 406.7 L1017.0 406.4 L1017.0 413.3 L1003.3 413.5 Z" fill="#c8918b" stroke="#e84a3a" stroke-width="2.3" stroke-linejoin="round"/>
<path d="M1019.0 406.4 L1032.7 406.2 L1032.7 413.1 L1019.0 413.3 Z" fill="#c8918b" stroke="#e84a3a" stroke-width="2.3" stroke-linejoin="round"/>
<path d="M1034.7 406.2 L1048.4 406.0 L1048.4 412.8 L1034.7 413.1 Z" fill="#c8918b" stroke="#e84a3a" stroke-width="2.3" stroke-linejoin="round"/>
<path d="M1050.4 406.0 L1064.1 405.8 L1064.1 412.6 L1050.4 412.8 Z" fill="#c8918b" stroke="#e84a3a" stroke-width="2.3" stroke-linejoin="round"/>
<path d="M1097.5 405.4 L1111.2 405.2 L1111.2 412.0 L1097.5 412.2 Z" fill="#c8918b" stroke="#e84a3a" stroke-width="2.3" stroke-linejoin="round"/>
<path d="M1003.3 415.5 L1017.0 415.3 L1017.0 422.1 L1003.3 422.3 Z" fill="#c8918b" stroke="#e84a3a" stroke-width="2.3" stroke-linejoin="round"/>
<path d="M1019.0 415.3 L1032.7 415.1 L1032.7 421.9 L1019.0 422.1 Z" fill="#c8918b" stroke="#e84a3a" stroke-width="2.3" stroke-linejoin="round"/>
<path d="M1034.7 415.1 L1048.4 414.8 L1048.4 421.7 L1034.7 421.9 Z" fill="#c8918b" stroke="#e84a3a" stroke-width="2.3" stroke-linejoin="round"/>
<path d="M1050.4 414.8 L1064.1 414.6 L1064.1 421.5 L1050.4 421.7 Z" fill="#c8918b" stroke="#e84a3a" stroke-width="2.3" stroke-linejoin="round"/>
<path d="M1066.1 414.6 L1079.8 414.4 L1079.8 421.3 L1066.1 421.5 Z" fill="#c8918b" stroke="#e84a3a" stroke-width="2.3" stroke-linejoin="round"/>
<path d="M1081.8 414.4 L1095.5 414.2 L1095.5 421.0 L1081.8 421.3 Z" fill="#c8918b" stroke="#e84a3a" stroke-width="2.3" stroke-linejoin="round"/>
<path d="M1128.9 413.8 L1142.6 413.6 L1142.6 420.4 L1128.9 420.6 Z" fill="#c8918b" stroke="#e84a3a" stroke-width="2.3" stroke-linejoin="round"/>
<path d="M1160.3 413.4 L1174.0 413.2 L1174.0 420.0 L1160.3 420.2 Z" fill="#c8918b" stroke="#e84a3a" stroke-width="2.3" stroke-linejoin="round"/>
<path d="M805 469.5 L1276.0 463.1 L1276.0 490.1 L805 496.5 Z" fill="#b5b4b0" stroke="#2c2c2c" stroke-width="1.7"/>
<path d="M805 478.5 L1276.0 472.1 M805 487.5 L1276.0 481.1 M820.7 469.3 L820.7 496.3 M836.4 469.1 L836.4 496.1 M852.1 468.9 L852.1 495.9 M867.8 468.7 L867.8 495.7 M883.5 468.4 L883.5 495.4 M899.2 468.2 L899.2 495.2 M914.9 468.0 L914.9 495.0 M930.6 467.8 L930.6 494.8 M946.3 467.6 L946.3 494.6 M962.0 467.4 L962.0 494.4 M977.7 467.2 L977.7 494.2 M993.4 467.0 L993.4 494.0 M1009.1 466.7 L1009.1 493.7 M1024.8 466.5 L1024.8 493.5 M1040.5 466.3 L1040.5 493.3 M1056.2 466.1 L1056.2 493.1 M1071.9 465.9 L1071.9 492.9 M1087.6 465.7 L1087.6 492.7 M1103.3 465.5 L1103.3 492.5 M1119.0 465.3 L1119.0 492.3 M1134.7 465.0 L1134.7 492.0 M1150.4 464.8 L1150.4 491.8 M1166.1 464.6 L1166.1 491.6 M1181.8 464.4 L1181.8 491.4 M1197.5 464.2 L1197.5 491.2 M1213.2 464.0 L1213.2 491.0 M1228.9 463.8 L1228.9 490.8 M1244.6 463.6 L1244.6 490.6 M1260.3 463.4 L1260.3 490.4 " stroke="#3a3a3a" stroke-width="1.1" fill="none"/>
<path d="M947.3 468.6 L961.0 468.4 L961.0 475.4 L947.3 475.6 Z" fill="#c8918b" stroke="#e84a3a" stroke-width="2.3" stroke-linejoin="round"/>
<path d="M963.0 468.4 L976.7 468.2 L976.7 475.2 L963.0 475.4 Z" fill="#c8918b" stroke="#e84a3a" stroke-width="2.3" stroke-linejoin="round"/>
<path d="M978.7 468.2 L992.4 468.0 L992.4 475.0 L978.7 475.2 Z" fill="#c8918b" stroke="#e84a3a" stroke-width="2.3" stroke-linejoin="round"/>
<path d="M994.4 468.0 L1008.1 467.7 L1008.1 474.7 L994.4 475.0 Z" fill="#c8918b" stroke="#e84a3a" stroke-width="2.3" stroke-linejoin="round"/>
<path d="M1010.1 467.7 L1023.8 467.5 L1023.8 474.5 L1010.1 474.7 Z" fill="#c8918b" stroke="#e84a3a" stroke-width="2.3" stroke-linejoin="round"/>
<path d="M1025.8 467.5 L1039.5 467.3 L1039.5 474.3 L1025.8 474.5 Z" fill="#c8918b" stroke="#e84a3a" stroke-width="2.3" stroke-linejoin="round"/>
<path d="M1057.2 467.1 L1070.9 466.9 L1070.9 473.9 L1057.2 474.1 Z" fill="#c8918b" stroke="#e84a3a" stroke-width="2.3" stroke-linejoin="round"/>
<path d="M804 408 L809 408 L809 434 L804 434" fill="#b5b4b0" stroke="#2c2c2c" stroke-width="1.7"/>
<path d="M804 417 H809 M804 426 H809" stroke="#363636" stroke-width="1.2"/>
</svg>
<div style="position:absolute;left:423px;top:329px;width:39px;height:78px;background:rgba(20,20,20,0.68)"></div>
<div style="position:absolute;left:424px;top:416px;width:38px;height:37px;background:rgba(20,20,20,0.68)"></div>
<div style="position:absolute;left:443px;top:463px;width:28px;height:8px;background:rgba(20,20,20,0.75)"></div>
<svg style="position:absolute;left:423px;top:329px" width="39" height="78" viewBox="0 0 39 78"><path d="M19.5 7 V17 M14.5 12 H24.5" stroke="#fff" stroke-width="2"/><path d="M14.5 64 H24.5" stroke="#fff" stroke-width="2"/></svg>
<div style="position:absolute;left:423px;top:360px;width:39px;text-align:center;font-size:13.5px;line-height:16px;color:#fff;letter-spacing:-0.3px">20.0</div>
<svg style="position:absolute;left:424px;top:416px" width="38" height="37" viewBox="0 0 38 37"><path d="M19 8 L30 14 L19 20 L8 14 Z" fill="#fff"/><path d="M10.2 17.8 L19 22.6 L27.8 17.8 L30 19 L19 25 L8 19 Z" fill="#fff"/><path d="M10.2 22.8 L19 27.6 L27.8 22.8 L30 24 L19 30 L8 24 Z" fill="#fff"/></svg>
</div>
<div id="tbl"></div>
<div class="btn" style="left:284px;top:501px;width:132px;height:29px"></div>
<div class="a" style="left:295px;top:506.5px;font-size:13.7px;line-height:18px;color:#2e2c4f">Download as CSV</div>
<div class="btn" style="left:419px;top:501px;width:99px;height:29px"></div>
<div class="a" style="left:429px;top:506.5px;font-size:14px;line-height:18px;color:#2e2c4f">Add to tasks</div>
<div class="btn" style="left:521px;top:501px;width:199px;height:29px"></div>
<div class="a" style="left:530px;top:506.5px;font-size:14.3px;line-height:18px;color:#2e2c4f">Serial Number Management</div>
<div class="a" style="left:738px;top:507px;font-size:14.35px;line-height:18px;color:#2e2c4f">595 unique elements - Module: 595</div>
<div class="a" style="left:982px;top:506px;width:1px;height:20px;background:#c8c8cc"></div>
<div class="a" style="left:1001px;top:508px;font-size:14px;line-height:18px;color:#2e2c4f">Entries to show:</div>
<div class="a" style="left:1104px;top:499px;width:56px;height:34px;border:1px solid #d0d0d4;border-radius:4px;background:#f8f8f8"></div>
<div class="a" style="left:1114px;top:508px;font-size:14px;line-height:18px;color:#2e2c4f">10</div>
<svg class="a" style="left:1145px;top:510px" width="12" height="10" viewBox="0 0 12 10"><path d="M2 3 L6 7 L10 3" fill="none" stroke="#15123a" stroke-width="2"/></svg>
<div class="a" style="left:1178px;top:506px;width:1px;height:20px;background:#c8c8cc"></div>
<div class="a" style="left:1197px;top:508px;width:51px;overflow:hidden;font-size:14px;letter-spacing:-0.25px;line-height:18px;color:#2e2c4f">Entries 1</div>
<div class="a" style="left:284px;top:533px;width:964px;height:15px;background:#fcfcfc"></div>
<svg class="a" style="left:286px;top:535px" width="10" height="11" viewBox="0 0 10 11"><path d="M8 1 L2 5.5 L8 10 Z" fill="#8a8a8a"/></svg>
<div class="a" style="left:302px;top:536px;width:773px;height:9px;border-radius:5px;background:#8a8a8a"></div>
<svg class="a" style="left:1236px;top:535px" width="10" height="11" viewBox="0 0 10 11"><path d="M2 1 L8 5.5 L2 10 Z" fill="#8a8a8a"/></svg>
<div class="a" style="left:284px;top:557px;width:949px;height:255px;background:#e9e9ec"></div>
<div class="a" style="left:284px;top:812px;width:949px;height:36px;background:#f8f8f8"></div>
<div class="a" style="left:284px;top:557px;width:949px;height:1px;background:#d4d4da"></div>
<div class="a" style="left:284px;top:609px;width:949px;height:1px;background:#d4d4da"></div>
<div class="a" style="left:284px;top:711px;width:949px;height:1px;background:#d4d4da"></div>
<div class="a" style="left:284px;top:812px;width:949px;height:1px;background:#d4d4da"></div>
<div class="a" style="left:284px;top:557px;width:1px;height:291px;background:#d4d4da"></div>
<div class="a" style="left:417px;top:557px;width:1px;height:291px;background:#d4d4da"></div>
<div class="a" style="left:503px;top:557px;width:1px;height:291px;background:#d4d4da"></div>
<div class="a" style="left:597px;top:557px;width:1px;height:291px;background:#d4d4da"></div>
<div class="a" style="left:744px;top:557px;width:1px;height:291px;background:#d4d4da"></div>
<div class="a" style="left:882px;top:557px;width:1px;height:291px;background:#d4d4da"></div>
<div class="a" style="left:998px;top:557px;width:1px;height:291px;background:#d4d4da"></div>
<div class="a" style="left:1141px;top:557px;width:1px;height:291px;background:#d4d4da"></div>
<div class="th a" style="left:299px;top:577px;font-size:14px;line-height:18px">Identifier</div>
<div class="a" style="left:380px;top:571px;width:23px;height:24px;border-radius:4px;background:#f3f3f6"><svg width="23" height="24" viewBox="0 0 23 24"><path d="M9.4 5.5 V18.8 M5.6 15 L9.4 18.8 L13.2 15 M14.6 18.8 V5.2 M10.8 9 L14.6 5.2 L18.4 9" fill="none" stroke="#15123a" stroke-width="1.35" stroke-linecap="round" stroke-linejoin="miter"/></svg></div>
<div class="th a" style="left:431.5px;top:577px;font-size:14px;line-height:18px">Type</div>
<div class="a" style="left:466px;top:571px;width:23px;height:24px;border-radius:4px;background:#f3f3f6"><svg width="23" height="24" viewBox="0 0 23 24"><path d="M9.4 5.5 V18.8 M5.6 15 L9.4 18.8 L13.2 15 M14.6 18.8 V5.2 M10.8 9 L14.6 5.2 L18.4 9" fill="none" stroke="#15123a" stroke-width="1.35" stroke-linecap="round" stroke-linejoin="miter"/></svg></div>
<div class="th a" style="left:518px;top:577px;font-size:14px;line-height:18px">Name</div>
<div class="a" style="left:560px;top:571px;width:23px;height:24px;border-radius:4px;background:#f3f3f6"><svg width="23" height="24" viewBox="0 0 23 24"><path d="M9.4 5.5 V18.8 M5.6 15 L9.4 18.8 L13.2 15 M14.6 18.8 V5.2 M10.8 9 L14.6 5.2 L18.4 9" fill="none" stroke="#15123a" stroke-width="1.35" stroke-linecap="round" stroke-linejoin="miter"/></svg></div>
<div class="th a" style="left:612px;top:577px;font-size:13.5px;line-height:18px">Serial number</div>
<div class="a" style="left:707px;top:571px;width:23px;height:24px;border-radius:4px;background:#f3f3f6"><svg width="23" height="24" viewBox="0 0 23 24"><path d="M9.4 5.5 V18.8 M5.6 15 L9.4 18.8 L13.2 15 M14.6 18.8 V5.2 M10.8 9 L14.6 5.2 L18.4 9" fill="none" stroke="#15123a" stroke-width="1.35" stroke-linecap="round" stroke-linejoin="miter"/></svg></div>
<div class="th a" style="left:758px;top:577px;font-size:13.6px;line-height:18px">Uploaded By</div>
<div class="a" style="left:846px;top:571px;width:23px;height:24px;border-radius:4px;background:#f3f3f6"><svg width="23" height="24" viewBox="0 0 23 24"><path d="M9.4 5.5 V18.8 M5.6 15 L9.4 18.8 L13.2 15 M14.6 18.8 V5.2 M10.8 9 L14.6 5.2 L18.4 9" fill="none" stroke="#15123a" stroke-width="1.35" stroke-linecap="round" stroke-linejoin="miter"/></svg></div>
<div class="th a" style="left:897px;top:577px;font-size:13.6px;line-height:18px">Category</div>
<div class="a" style="left:961px;top:571px;width:23px;height:24px;border-radius:4px;background:#f3f3f6"><svg width="23" height="24" viewBox="0 0 23 24"><path d="M9.4 5.5 V18.8 M5.6 15 L9.4 18.8 L13.2 15 M14.6 18.8 V5.2 M10.8 9 L14.6 5.2 L18.4 9" fill="none" stroke="#15123a" stroke-width="1.35" stroke-linecap="round" stroke-linejoin="miter"/></svg></div>
<div class="th a" style="left:1012px;top:577px;font-size:13.7px;line-height:18px">Sub-category</div>
<div class="a" style="left:1104px;top:571px;width:23px;height:24px;border-radius:4px;background:#f3f3f6"><svg width="23" height="24" viewBox="0 0 23 24"><path d="M9.4 5.5 V18.8 M5.6 15 L9.4 18.8 L13.2 15 M14.6 18.8 V5.2 M10.8 9 L14.6 5.2 L18.4 9" fill="none" stroke="#15123a" stroke-width="1.35" stroke-linecap="round" stroke-linejoin="miter"/></svg></div>
<div class="th a" style="left:1156px;top:577px;font-size:13.4px;line-height:18px">Rating</div>
<div class="a" style="left:1202px;top:571px;width:23px;height:24px;border-radius:4px;background:#f3f3f6"><svg width="23" height="24" viewBox="0 0 23 24"><path d="M9.4 5.5 V18.8 M5.6 15 L9.4 18.8 L13.2 15 M14.6 18.8 V5.2 M10.8 9 L14.6 5.2 L18.4 9" fill="none" stroke="#15123a" stroke-width="1.35" stroke-linecap="round" stroke-linejoin="miter"/></svg></div>
<svg class="a" style="left:361px;top:573px" width="15" height="15" viewBox="0 0 15 15"><circle cx="7.5" cy="7.5" r="7" fill="#15123a"/><path d="M7.5 6.5 V11.5" stroke="#fff" stroke-width="2"/><circle cx="7.5" cy="4" r="1.1" fill="#fff"/></svg>
<div class="td a" style="left:299px;top:653px;font-size:11.2px;line-height:16px;letter-spacing:0px">MOD18237445</div>
<div class="td a" style="left:431.5px;top:653px;font-size:11.6px;line-height:16px;letter-spacing:0px">module</div>
<div class="td a" style="left:611.5px;top:653px;font-size:11px;line-height:16px;letter-spacing:-0.45px">11304010401075</div>
<div class="td a" style="left:758px;top:653px;font-size:11.4px;line-height:16px;letter-spacing:0px">Above user</div>
<div class="td a" style="left:299px;top:755px;font-size:11.2px;line-height:16px;letter-spacing:0px">MOD18237445</div>
<div class="td a" style="left:431.5px;top:755px;font-size:11.6px;line-height:16px;letter-spacing:0px">module</div>
<div class="td a" style="left:611.5px;top:755px;font-size:11px;line-height:16px;letter-spacing:-0.45px">11304010401075</div>
<div class="td a" style="left:758px;top:755px;font-size:11.4px;line-height:16px;letter-spacing:0px">Above user</div>
<div class="td a" style="left:897px;top:653px;font-size:11.4px;line-height:16px;letter-spacing:0px">None</div>
<div class="td a" style="left:1012px;top:653px;font-size:11.4px;line-height:16px;letter-spacing:0px">Shading</div>
<div class="td a" style="left:897px;top:745px;font-size:11.4px;line-height:16px;letter-spacing:0px">PV Panel</div>
<div class="td a" style="left:897px;top:764px;font-size:11.4px;line-height:16px;letter-spacing:0px">Condition</div>
<div class="td a" style="left:1012px;top:745px;font-size:11.3px;line-height:16px;letter-spacing:0px">Presence of damage</div>
<div class="td a" style="left:1012px;top:764px;font-size:11.3px;line-height:16px;letter-spacing:0px">or visual defects</div>
<div class="a" style="left:1234px;top:557px;width:14px;height:291px;background:#fcfcfc"></div>
<svg class="a" style="left:1235px;top:560px" width="11" height="9" viewBox="0 0 11 9"><path d="M1 8 L5.5 1.5 L10 8 Z" fill="#8a8a8a"/></svg>
<div class="a" style="left:1236px;top:575px;width:9px;height:70px;border-radius:5px;background:#8a8a8a"></div>
<svg class="a" style="left:1235px;top:836px" width="11" height="9" viewBox="0 0 11 9"><path d="M1 1 L5.5 7.5 L10 1 Z" fill="#8a8a8a"/></svg>
<div class="a" style="left:284px;top:848px;width:964px;height:15px;background:#fcfcfc"></div>
<svg class="a" style="left:286px;top:850px" width="10" height="11" viewBox="0 0 10 11"><path d="M8 1 L2 5.5 L8 10 Z" fill="#8a8a8a"/></svg>
<div class="a" style="left:302px;top:851px;width:307px;height:9px;border-radius:5px;background:#8a8a8a"></div>
<svg class="a" style="left:1220px;top:850px" width="10" height="11" viewBox="0 0 10 11"><path d="M2 1 L8 5.5 L2 10 Z" fill="#8a8a8a"/></svg>
<div id="rp"></div>
<div class="a" style="left:1303px;top:30px;font-size:25px;font-weight:bold;letter-spacing:-0.2px;color:#15123a;line-height:30px">MOD18261281</div>
<div class="a" style="left:1771px;top:32px;width:24px;height:24px;border:1px solid #15123a;border-radius:3px;background:#f8f8f8"></div>
<svg class="a" style="left:1771px;top:32px" width="24" height="24" viewBox="0 0 24 24"><path d="M8 8 L16 16 M16 8 L8 16" stroke="#15123a" stroke-width="1.5"/></svg>
<div class="a" style="left:1276px;top:88px;width:545px;height:1px;background:#d2d2d2"></div>
<div class="a" style="left:1807px;top:89px;width:14px;height:798px;background:#fbfbfb"></div>
<svg class="a" style="left:1809px;top:93px" width="11" height="9" viewBox="0 0 11 9"><path d="M1 8 L5.5 1.5 L10 8 Z" fill="#8a8a8a"/></svg>
<div class="a" style="left:1810px;top:364px;width:9px;height:272px;border-radius:5px;background:#8a8a8a"></div>
<svg class="a" style="left:1809px;top:876px" width="11" height="9" viewBox="0 0 11 9"><path d="M1 1 L5.5 7.5 L10 1 Z" fill="#8a8a8a"/></svg>

<svg class="a" style="left:1303px;top:103px;border-radius:3px" width="476" height="356" viewBox="1303 103 476 356">
 <defs>
  <linearGradient id="pg" x1="0" y1="0" x2="1" y2="1">
   <stop offset="0" stop-color="#8e998a"/>
   <stop offset="0.45" stop-color="#9ca592"/>
   <stop offset="1" stop-color="#b0b09e"/>
  </linearGradient>
  <radialGradient id="pv" cx="0.3" cy="0.45" r="0.8">
   <stop offset="0" stop-color="#a5ab98" stop-opacity="0.5"/>
   <stop offset="1" stop-color="#8a8f80" stop-opacity="0"/>
  </radialGradient>
 </defs>
 <rect x="1303" y="103" width="476" height="356" fill="url(#pg)"/>
 <rect x="1303" y="103" width="476" height="356" fill="url(#pv)"/>
 <path d="M1340 103 L1374 459 M1596 103 L1490 459 M1779 118 L1575 459 M1779 296 L1640 459 M1779 377 L1725 459 M1303 233.5 L1779 252 M1303 373 L1779 340.5 M1303 454 L1779 392" stroke="#5e5a4c" stroke-opacity="0.3" stroke-width="4" fill="none"/>
 <path d="M1340 103 L1374 459 M1596 103 L1490 459 M1779 118 L1575 459 M1779 296 L1640 459 M1779 377 L1725 459 M1303 233.5 L1779 252 M1303 373 L1779 340.5 M1303 454 L1779 392" stroke="#ddd4c6" stroke-width="2.4" fill="none"/>
 <g stroke="#6d6c60" stroke-width="0.8" fill="none" opacity="0.6">
  <path d="M1443 111 L1580 131"/><path d="M1408 165 L1567 180"/><path d="M1627 136 L1749 154"/>
 </g>
</svg>

<div class="a" style="left:1303px;top:484px;font-size:13px;line-height:16px;color:#2e2c4f">Date:</div>
<div class="a" style="left:1303px;top:520px;font-size:13.5px;line-height:16px;color:#2e2c4f">Category:</div>
<div class="a" style="left:1303px;top:556px;font-size:13.5px;line-height:16px;color:#2e2c4f">Sub-category:</div>
<div class="a" style="left:1303px;top:592px;font-size:13.3px;line-height:16px;color:#2e2c4f">Description:</div>
<div class="a" style="left:1303px;top:628px;font-size:13.3px;line-height:16px;color:#2e2c4f">Rating:</div>
<div class="a" style="left:1502px;top:478px;width:278px;height:27px;border:1px solid #cfcfd2;border-radius:3px;background:#f8f8f8"></div>
<div class="a" style="left:1502px;top:514px;width:278px;height:27px;border:1px solid #cfcfd2;border-radius:3px;background:#f8f8f8"></div>
<div class="a" style="left:1502px;top:550px;width:278px;height:27px;border:1px solid #cfcfd2;border-radius:3px;background:#f8f8f8"></div>
<div class="a" style="left:1502px;top:586px;width:278px;height:27px;border:1px solid #cfcfd2;border-radius:3px;background:#f8f8f8"></div>
<div class="a" style="left:1502px;top:622px;width:278px;height:27px;border:1px solid #cfcfd2;border-radius:3px;background:#f8f8f8"></div>
<div class="a" style="left:1507px;top:483px;font-size:14px;font-weight:bold;line-height:18px;color:#15123a">2023-09-28 21:14:48</div>
<div class="a" style="left:1507px;top:519px;font-size:13.4px;font-weight:bold;line-height:18px;color:#15123a">None</div>
<div class="a" style="left:1507px;top:555px;font-size:13.4px;font-weight:bold;line-height:18px;color:#15123a">Shading</div>
<div class="a" style="left:1507px;top:627px;font-size:13.4px;font-weight:bold;line-height:18px;color:#15123a">N/A</div>
<div class="a" style="left:1303px;top:667px;width:476px;height:1px;background:#dedede"></div>
<div class="a" style="left:1303px;top:687px;font-size:13px;font-weight:bold;line-height:16px;color:#15123a">Thermal Defect</div>

<svg class="a" style="left:1304px;top:721px;border-radius:4px 4px 0 0" width="475" height="166" viewBox="1304 721 475 166">
 <defs>
  <linearGradient id="tl" x1="0" y1="0" x2="1" y2="0">
   <stop offset="0" stop-color="#fa9227"/>
   <stop offset="0.6" stop-color="#f8862a"/>
   <stop offset="1" stop-color="#f3702e"/>
  </linearGradient>
  <filter id="bl" x="-20%" y="-20%" width="140%" height="140%"><feGaussianBlur stdDeviation="1.8"/></filter>
  <linearGradient id="tt" x1="0" y1="0" x2="0" y2="1">
   <stop offset="0" stop-color="#f88a2a" stop-opacity="0.8"/>
   <stop offset="1" stop-color="#f1622f" stop-opacity="0"/>
  </linearGradient>
 </defs>
 <rect x="1304" y="721" width="475" height="166" fill="#f1622f"/>
 <path d="M1300 731 L1312 731 L1386 890 L1300 890 Z" fill="url(#tl)" filter="url(#bl)"/>
 <ellipse cx="1343" cy="862" rx="4" ry="14" fill="#ffd23a" opacity="0.8" filter="url(#bl)"/>
 <rect x="1304" y="721" width="475" height="10" fill="url(#tt)"/>
 <path d="M1400 790.6 L1779 755 L1779 887 L1419.6 887 Z" fill="#ffb40e"/>
 <g stroke="#f2862b" stroke-width="1.3" fill="none">
  <path d="M1491 785 L1509 887"/><path d="M1580 776 L1596 887"/><path d="M1669 768 L1684 887"/><path d="M1760 760 L1772 887"/>
  <path d="M1409 838 L1779 802"/><path d="M1413 860 L1779 826"/>
 </g>
 <rect x="1605.5" y="833.8" width="55.5" height="20.8" fill="none" stroke="#1a1a1a" stroke-width="1.2"/>
 <rect x="1417.5" y="860.5" width="266.5" height="40" fill="none" stroke="#1a1a1a" stroke-width="1.2"/>
</svg>
</body></html>
